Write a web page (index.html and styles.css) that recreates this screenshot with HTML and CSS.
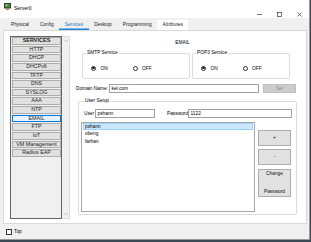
FILE: index.html
```html
<!DOCTYPE html>
<html lang="en">
<head>
<meta charset="UTF-8">
<meta name="viewport" content="width=device-width, initial-scale=1.0">
<title>Server0</title>
<link rel="stylesheet" href="styles.css">
</head>
<body>

<div class="window">
    <div class="titlebar">
        <svg class="app-icon" width="7" height="7" viewBox="0 0 7 7">
            <rect x="0.5" y="0.5" width="6" height="4.5" fill="#3f8f3a" stroke="#3a3a3a" stroke-width="1"/>
            <rect x="1.5" y="1.5" width="2" height="1.5" fill="#9ad36a"/>
            <rect x="2" y="5.5" width="3" height="1.5" fill="#b08a4a"/>
        </svg>
        <span class="title">Server0</span>
        <div class="controls">
            <span class="ctl"><svg width="5" height="5" viewBox="0 0 5 5"><line x1="0" y1="2.5" x2="5" y2="2.5" stroke="#333" stroke-width="0.7"/></svg></span>
            <span class="ctl"><svg width="5" height="5" viewBox="0 0 5 5"><rect x="0.5" y="0.5" width="4" height="4" fill="none" stroke="#333" stroke-width="0.7"/></svg></span>
            <span class="ctl"><svg width="5" height="5" viewBox="0 0 5 5"><path d="M0.5 0.5 L4.5 4.5 M4.5 0.5 L0.5 4.5" stroke="#333" stroke-width="0.7"/></svg></span>
        </div>
    </div>

    <div class="tabs">
        <span class="tab">Physical</span>
        <span class="tab">Config</span>
        <span class="tab active">Services</span>
        <span class="tab">Desktop</span>
        <span class="tab">Programming</span>
        <span class="tab hover">Attributes</span>
    </div>

    <div class="panel">
        <div class="services">
            <div class="svc-list">
                <div class="svc-item svc-head">SERVICES</div>
                <div class="svc-item">HTTP</div>
                <div class="svc-item">DHCP</div>
                <div class="svc-item">DHCPv6</div>
                <div class="svc-item">TFTP</div>
                <div class="svc-item">DNS</div>
                <div class="svc-item">SYSLOG</div>
                <div class="svc-item">AAA</div>
                <div class="svc-item">NTP</div>
                <div class="svc-item selected">EMAIL</div>
                <div class="svc-item">FTP</div>
                <div class="svc-item">IoT</div>
                <div class="svc-item">VM Management</div>
                <div class="svc-item">Radius EAP</div>
            </div>
            <div class="scroll">
                <svg width="6" height="4" viewBox="0 0 6 4"><polyline points="1,3 3,1 5,3" fill="none" stroke="#b5b5b5" stroke-width="0.7"/></svg>
                <svg width="6" height="4" viewBox="0 0 6 4"><polyline points="1,1 3,3 5,1" fill="none" stroke="#b5b5b5" stroke-width="0.7"/></svg>
            </div>
        </div>

        <div class="email">
            <div class="email-title">EMAIL</div>

            <div class="svc-row">
                <fieldset class="group smtp">
                    <legend>SMTP Service</legend>
                    <div class="radios">
                        <span class="radio"><span class="dot on"></span>ON</span>
                        <span class="radio"><span class="dot"></span>OFF</span>
                    </div>
                </fieldset>
                <fieldset class="group pop3">
                    <legend>POP3 Service</legend>
                    <div class="radios">
                        <span class="radio"><span class="dot on"></span>ON</span>
                        <span class="radio"><span class="dot"></span>OFF</span>
                    </div>
                </fieldset>
            </div>

            <div class="domain-row">
                <span class="lbl-domain">Domain Name:</span>
                <div class="field domain">kel.com</div>
                <div class="btn set">Set</div>
            </div>

            <fieldset class="group user-setup">
                <legend>User Setup</legend>
                <div class="user-row">
                    <span class="lbl-user">User</span>
                    <div class="field user">pshann</div>
                    <span class="lbl-pass">Password</span>
                    <div class="field pass">1122</div>
                </div>
                <div class="list-row">
                    <div class="user-list">
                        <div class="user-item selected">pshann</div>
                        <div class="user-item">obeng</div>
                        <div class="user-item">farhan</div>
                    </div>
                    <div class="user-btns">
                        <div class="btn plus">+</div>
                        <div class="btn minus">-</div>
                        <div class="btn change"><span>Change</span><span>Password</span></div>
                    </div>
                </div>
            </fieldset>
        </div>
    </div>

    <div class="bottom">
        <span class="check"></span>
        <span>Top</span>
    </div>
</div>

</body>
</html>
```

FILE: styles.css
```css
/* Packet Tracer style window */
* {
    box-sizing: border-box;
}

body {
    margin: 0;
    background-color: #3c4954;
    font-family: "Liberation Sans", Arial, sans-serif;
    font-size: 4.8px;
    color: #000;
}

.window {
    width: 310px;
    height: 240px;
    background-color: #f0f0f0;
    border-right: 1px solid #9a9a9a;
    border-bottom: 1px solid #9a9a9a;
    display: flex;
    flex-direction: column;
}

/* title bar */
.titlebar {
    height: 18px;
    background-color: #fff;
    display: flex;
    align-items: flex-start;
    padding-left: 4px;
}

.app-icon {
    margin-top: 3px;
}

.title {
    margin-left: 3px;
    margin-top: 5px;
    line-height: 6px;
    font-size: 5px;
}

.controls {
    margin-left: auto;
    display: flex;
    margin-top: 12px;
}

.ctl {
    width: 20px;
    height: 5px;
    display: flex;
    justify-content: center;
}

/* tabs */
.tabs {
    height: 12px;
    display: flex;
    align-items: flex-end;
    padding-left: 5.5px;
}

.tab {
    height: 10px;
    line-height: 9px;
    padding: 0 5.5px;
    color: #222;
}

.tab.active {
    color: #1f6fbf;
    box-shadow: inset 0 -1.5px 0 #1a82d8;
}

.tab.hover {
    background-color: #fff;
}

/* main panel */
.panel {
    margin-left: 3px;
    width: 304px;
    height: 194px;
    background-color: #fff;
    border: 1px solid #d9d9d9;
    display: flex;
    padding: 5px 0 0 6px;
}

.services {
    display: flex;
    height: 183px;
}

.svc-list {
    width: 52px;
    border: 1px solid #646464;
    background-color: #f0f0f0;
    padding-left: 1px;
}

.svc-item {
    height: 7.63px;
    margin-bottom: 1px;
    background-color: #e1e1e1;
    border: 1px solid #adadad;
    font-size: 5.3px;
    line-height: 5.6px;
    text-align: center;
    color: #222;
}

.svc-head {
    font-weight: bold;
    font-size: 5.5px;
}

.svc-item.selected {
    background-color: #e5f1fb;
    border-color: #0078d7;
}

.scroll {
    width: 8px;
    border: 1px solid #dcdcdc;
    border-left: none;
    background-color: #f0f0f0;
    display: flex;
    flex-direction: column;
    justify-content: space-between;
    align-items: center;
    padding: 2px 0;
}

/* email area */
.email {
    margin-left: 6px;
    width: 221px;
}

.email-title {
    margin-top: 4px;
    line-height: 6px;
    text-align: center;
    padding-right: 8px;
}

.group {
    margin: 0;
    padding: 0;
    border: 1px solid #dcdcdc;
    border-radius: 2px;
    min-width: 0;
}

.group legend {
    padding: 0 1px;
    margin-left: 3px;
    line-height: 6px;
}

.svc-row {
    display: flex;
    margin-top: 4px;
    margin-left: 6px;
}

.smtp {
    width: 108px;
    height: 29px;
}

.pop3 {
    width: 98px;
    height: 29px;
    margin-left: 2px;
}

.radios {
    display: flex;
    padding: 9.5px 0 0 8px;
}

.radio {
    width: 41.5px;
    display: flex;
    align-items: center;
    line-height: 5px;
}

.dot {
    width: 5px;
    height: 5px;
    border: 0.7px solid #333;
    border-radius: 50%;
    margin-right: 4.5px;
    display: flex;
    align-items: center;
    justify-content: center;
    background-color: #fff;
}

.dot.on::after {
    content: "";
    width: 2.4px;
    height: 2.4px;
    border-radius: 50%;
    background-color: #222;
}

.domain-row {
    display: flex;
    align-items: center;
    margin-top: 5px;
    height: 9px;
}

.lbl-domain {
    width: 33px;
}

.field {
    height: 9px;
    border: 1px solid #a0a0a0;
    background-color: #fff;
    line-height: 7px;
    padding-left: 1.5px;
}

.domain {
    width: 150px;
}

.btn {
    background-color: #e1e1e1;
    border: 1px solid #adadad;
    text-align: center;
    color: #111;
}

.btn.set {
    width: 33px;
    height: 9px;
    line-height: 7px;
    margin-left: 4px;
    background-color: #cccccc;
    border-color: #bfbfbf;
    color: #8a8a8a;
}

.user-setup {
    margin-top: 5px;
    margin-left: 2px;
    width: 219px;
    height: 117px;
    padding: 0 0 0 2px;
}

.user-row {
    display: flex;
    align-items: center;
    padding: 4.5px 0 0 3px;
}

.lbl-user {
    width: 11px;
}

.user {
    width: 60px;
}

.lbl-pass {
    margin-left: 12px;
    width: 21px;
}

.pass {
    width: 104px;
}

.list-row {
    display: flex;
    margin-top: 4px;
}

.user-list {
    width: 174px;
    height: 90px;
    border: 1px solid #a9a9a9;
    background-color: #fff;
    padding: 0 1px;
}

.user-item {
    height: 7.5px;
    line-height: 7.5px;
    padding-left: 2px;
}

.user-item.selected {
    background-color: #cce8ff;
    border: 1px solid #99d1ff;
    line-height: 5.5px;
    padding-left: 1px;
}

.user-btns {
    margin-left: 3px;
    width: 33px;
    padding-top: 8px;
    display: flex;
    flex-direction: column;
}

.btn.plus,
.btn.minus {
    height: 16px;
    line-height: 14px;
}

.btn.minus {
    margin-top: 3px;
}

.btn.change {
    margin-top: 4px;
    height: 28px;
    display: flex;
    flex-direction: column;
    justify-content: space-between;
    padding: 1.5px 0;
    line-height: 5px;
}

/* bottom bar */
.bottom {
    flex: 1;
    display: flex;
    align-items: center;
    padding-left: 6px;
}

.check {
    width: 6px;
    height: 6px;
    border: 0.7px solid #333;
    background-color: #fff;
    margin-right: 2px;
}
```
